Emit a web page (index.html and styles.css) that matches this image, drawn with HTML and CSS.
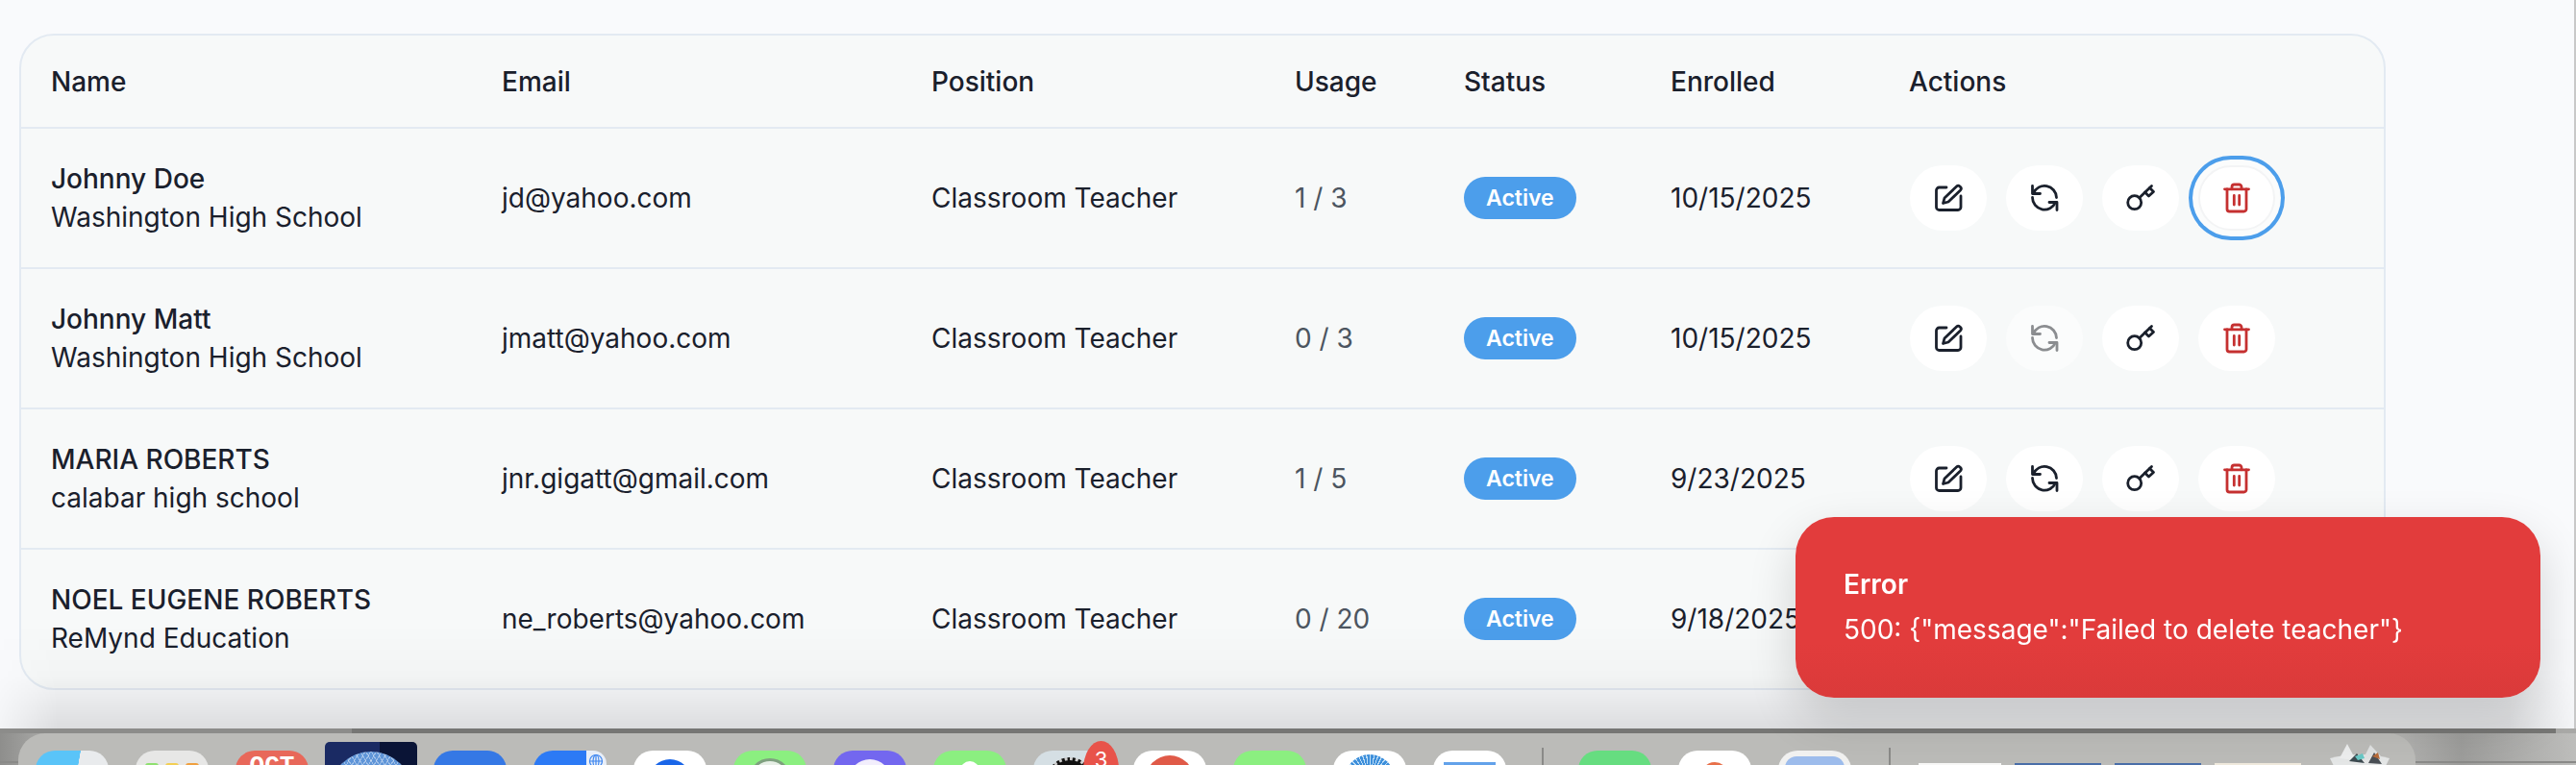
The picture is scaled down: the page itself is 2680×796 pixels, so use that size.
FILE: index.html
```html
<!DOCTYPE html>
<html lang="en">
<head>
<meta charset="utf-8">
<title>Teachers</title>
<link rel="stylesheet" href="styles.css">
</head>
<body>
<svg class="sprites" aria-hidden="true">
  <symbol id="i-edit" viewBox="0 0 32 32"><path d="M14 5H6.500A3 3 0 0 0 3.500 8V25.500A3 3 0 0 0 6.500 28.500H26A3 3 0 0 0 29 25.500V14"/><path d="M10.500 21.500L12 16L24.500 4A2.500 2.500 0 0 1 28 4L28.500 4.500A2.500 2.500 0 0 1 28.500 8L16 20Z"/></symbol>
  <symbol id="i-sync" viewBox="0 0 32 32"><path d="M3.500 3.500V11.500H11.500"/><path d="M29 28.500V20.500H21"/><path d="M4.500 11A12.500 12.500 0 0 1 28.500 15.500"/><path d="M3.500 15.500A12.500 12.500 0 0 0 27.500 20.500"/></symbol>
  <symbol id="i-key" viewBox="0 0 32 32"><circle cx="9.700" cy="20.700" r="7"/><path d="M14.800 15.800L27.500 3.500"/><path d="M20.500 10L24.500 14L29.500 9.500L25.500 5.500"/></symbol>
  <symbol id="i-trash" viewBox="0 0 32 32"><path d="M3.500 6.800H28.500"/><path d="M11 6.800V4.500A2.500 2.500 0 0 1 13.500 2H18.500A2.500 2.500 0 0 1 21 4.500V6.800"/><path d="M6 6.800V27.500A2.500 2.500 0 0 0 8.500 30H23.500A2.500 2.500 0 0 0 26 27.500V6.800"/><path d="M13.300 13.500V23M18.700 13.500V23"/></symbol>
</svg>

<main class="page">
  <section class="card">
    <table class="teachers">
      <colgroup>
        <col class="c-name"><col class="c-email"><col class="c-position"><col class="c-usage"><col class="c-status"><col class="c-enrolled"><col class="c-actions">
      </colgroup>
      <thead>
        <tr><th>Name</th><th>Email</th><th>Position</th><th>Usage</th><th>Status</th><th>Enrolled</th><th>Actions</th></tr>
      </thead>
      <tbody>
        <tr>
          <td><div class="person">Johnny Doe</div><div>Washington High School</div></td>
          <td>jd@yahoo.com</td><td>Classroom Teacher</td><td class="usage">1 / 3</td>
          <td><span class="badge">Active</span></td><td>10/15/2025</td>
          <td><div class="actions">
            <button class="act"><svg class="ico"><use href="#i-edit"/></svg></button>
            <button class="act"><svg class="ico"><use href="#i-sync"/></svg></button>
            <button class="act"><svg class="ico"><use href="#i-key"/></svg></button>
            <button class="act act-danger act-focus"><svg class="ico"><use href="#i-trash"/></svg></button>
          </div></td>
        </tr>
        <tr>
          <td><div class="person">Johnny Matt</div><div>Washington High School</div></td>
          <td>jmatt@yahoo.com</td><td>Classroom Teacher</td><td class="usage">0 / 3</td>
          <td><span class="badge">Active</span></td><td>10/15/2025</td>
          <td><div class="actions">
            <button class="act"><svg class="ico"><use href="#i-edit"/></svg></button>
            <button class="act act-off"><svg class="ico"><use href="#i-sync"/></svg></button>
            <button class="act"><svg class="ico"><use href="#i-key"/></svg></button>
            <button class="act act-danger"><svg class="ico"><use href="#i-trash"/></svg></button>
          </div></td>
        </tr>
        <tr>
          <td><div class="person">MARIA ROBERTS</div><div>calabar high school</div></td>
          <td>jnr.gigatt@gmail.com</td><td>Classroom Teacher</td><td class="usage">1 / 5</td>
          <td><span class="badge">Active</span></td><td>9/23/2025</td>
          <td><div class="actions">
            <button class="act"><svg class="ico"><use href="#i-edit"/></svg></button>
            <button class="act"><svg class="ico"><use href="#i-sync"/></svg></button>
            <button class="act"><svg class="ico"><use href="#i-key"/></svg></button>
            <button class="act act-danger"><svg class="ico"><use href="#i-trash"/></svg></button>
          </div></td>
        </tr>
        <tr>
          <td><div class="person">NOEL EUGENE ROBERTS</div><div>ReMynd Education</div></td>
          <td>ne_roberts@yahoo.com</td><td>Classroom Teacher</td><td class="usage">0 / 20</td>
          <td><span class="badge">Active</span></td><td>9/18/2025</td>
          <td><div class="actions">
            <button class="act"><svg class="ico"><use href="#i-edit"/></svg></button>
            <button class="act"><svg class="ico"><use href="#i-sync"/></svg></button>
            <button class="act"><svg class="ico"><use href="#i-key"/></svg></button>
            <button class="act act-danger"><svg class="ico"><use href="#i-trash"/></svg></button>
          </div></td>
        </tr>
      </tbody>
    </table>
  </section>
</main>

<div class="toast" role="alert">
  <div class="toast-title">Error</div>
  <div class="toast-msg">500: {"message":"Failed to delete teacher"}</div>
</div>

<footer class="desk">
  <nav class="dock">
    <div class="app finder"></div>
    <div class="app launchpad"><i class="dot d-g"></i><i class="dot d-y"></i><i class="dot d-o"></i></div>
    <div class="app calendar">OCT</div>
    <div class="app globe"><i class="sphere"></i></div>
    <div class="app blue"></div>
    <div class="app translate"><svg class="web" viewBox="0 0 16 16"><circle cx="8" cy="8" r="6.500"/><ellipse cx="8" cy="8" rx="3" ry="6.500"/><path d="M1.500 8H14.500M8 1.500V14.500"/></svg></div>
    <div class="app white"><i class="cap cap-blue"></i></div>
    <div class="app green"><i class="cap cap-ring"></i></div>
    <div class="app purple"><i class="cap cap-pale"></i></div>
    <div class="app green"><i class="cap cap-white"></i></div>
    <div class="app settings"><i class="cap cap-black"></i><span class="count">3</span></div>
    <div class="app white"><i class="cap cap-red"></i></div>
    <div class="app green"></div>
    <div class="app white"><i class="cap cap-safari"></i></div>
    <div class="app white"><i class="bar"></i></div>
    <div class="sep sep-a"></div>
    <div class="app mint"></div>
    <div class="app white"><i class="cap cap-orange"></i></div>
    <div class="app folder"><i class="pane"></i></div>
    <div class="sep sep-b"></div>
    <div class="thumb t-white"></div>
    <div class="thumb t-blue"></div>
    <div class="thumb t-blue"></div>
    <div class="thumb t-paper"></div>
    <svg class="bin" viewBox="0 0 70 24"><path d="M4 16Q35 8 66 16L62 24H8Z" fill="#e4e6e6"/><path d="M14 16L22 1L31 18Z" fill="#eceded"/><path d="M38 18L46 2L58 15Z" fill="#dfe1e1"/><path d="M24 19L32 11L40 21Z" fill="#3d4a50"/><path d="M44 21L50 10L58 22Z" fill="#4a4f55"/><path d="M30 14L38 11L40 16L33 18Z" fill="#67c7c4"/><path d="M48 14L54 10L56 17Z" fill="#b56a3a"/></svg>
  </nav>
</footer>
</body>
</html>
```

FILE: styles.css
```css
* { box-sizing: border-box; }

html, body {
  margin: 0;
  height: 796px;
  overflow: hidden;
}

body {
  font-family: Inter, "Liberation Sans", sans-serif;
  font-size: 28px;
  line-height: 40px;
  color: #1a202c;
  background: #a6a6a4;
  display: flex;
  flex-direction: column;
}

.sprites { display: none; }

/* page */
.page {
  position: relative;
  height: 758px;
  flex: none;
  padding: 35px 196px 0 20px;
  background: #f9fafc;
  border-right: 2px solid #c8c8c8;
}

.page::after {
  content: "";
  position: absolute;
  left: 0;
  right: 0;
  bottom: 0;
  height: 110px;
  background: linear-gradient(to bottom, rgba(0,0,0,0), rgba(0,0,0,.02) 50%, rgba(0,0,0,.115));
  -webkit-mask-image: linear-gradient(to right, rgba(0,0,0,.2), #000 60px, #000 2610px, rgba(0,0,0,.2));
  mask-image: linear-gradient(to right, rgba(0,0,0,.2), #000 60px, #000 2610px, rgba(0,0,0,.2));
  pointer-events: none;
}

.card {
  height: 683px;
  background: #f7f9f9;
  border: 2px solid #e3eaf2;
  border-radius: 36px;
  overflow: hidden;
}

.teachers {
  width: 100%;
  table-layout: fixed;
  border-collapse: separate;
  border-spacing: 0;
}

.c-name { width: 469px; }
.c-email { width: 447px; }
.c-position { width: 378px; }
.c-usage { width: 176px; }
.c-status { width: 215px; }
.c-enrolled { width: 248px; }

th, td {
  padding: 0 0 0 31px;
  text-align: left;
  vertical-align: middle;
  border-bottom: 2px solid #e3eaf2;
}

th {
  height: 97px;
  font-weight: 450;
}

td {
  height: 146px;
  font-weight: 400;
}

tbody tr:last-child td { border-bottom: 0; height: 144px; }

.person { font-weight: 450; }
.usage { color: #4c5560; }

.badge {
  display: inline-flex;
  align-items: center;
  height: 44px;
  padding: 0 23px;
  border-radius: 22px;
  background: #4c9eeb;
  color: #fff;
  font-size: 23px;
  font-weight: 600;
  vertical-align: middle;
}

.actions {
  display: flex;
  gap: 20px;
  padding-left: 1px;
}

.act {
  width: 80px;
  height: 68px;
  padding: 0;
  display: flex;
  align-items: center;
  justify-content: center;
  background: #fff;
  border: 0;
  border-radius: 34px;
  color: #1a202c;
}

.ico {
  width: 32px;
  height: 32px;
  fill: none;
  stroke: currentColor;
  stroke-width: 2.8;
  stroke-linecap: round;
  stroke-linejoin: round;
}

.act-danger { color: #c53030; }
.act-off { background: #fbfcfc; color: #8b8d90; }

.act-focus {
  border: 2px solid #f3f4f5;
  box-shadow: 0 0 0 6px #fbfcfc, 0 0 0 10px #4c9eeb;
}

/* toast */
.toast {
  position: fixed;
  left: 1868px;
  top: 538px;
  width: 775px;
  height: 188px;
  padding: 47px 50px;
  border-radius: 40px;
  background: linear-gradient(to bottom, #e23c3c 70%, #da3a3a);
  color: #fff;
  line-height: 47px;
  box-shadow: 0 20px 50px rgba(0,0,0,.16);
  z-index: 5;
}

.toast-title { font-weight: 600; }
.toast-msg { font-weight: 400; }

/* desktop and dock */
.desk {
  flex: 1;
  border-top: 5px solid #7a7a78;
  border-image: linear-gradient(to right, #8c8c8a 367px, #767674 367px, #767674 2658px, #a8a8a6 2658px) 1;
  background:
    linear-gradient(to bottom, transparent 29px, #8a8a88 29px, #8a8a88 31px, transparent 31px),
    linear-gradient(to right, #8e8e8c, #b0b0ae 60px, #b0b0ae 2500px, #9c9c9a 2560px, #bdbdbb);
  overflow: hidden;
}

.dock {
  display: flex;
  align-items: flex-start;
  gap: 28px;
  height: 33px;
  width: 2494px;
  margin-left: 19px;
  padding: 18px 0 0 18px;
  background: #bbbbb8;
  border-radius: 28px 28px 0 0;
}

.app {
  position: relative;
  flex: none;
  display: flex;
  justify-content: center;
  width: 76px;
  height: 60px;
  border-radius: 20px 20px 0 0;
}

.finder { background: linear-gradient(100deg, #5ac4f8 54%, #e9ebed 54.500%); }

.launchpad {
  gap: 7px;
  padding-top: 13px;
  background: #e7e7e6;
}

.dot {
  width: 14px;
  height: 14px;
  border-radius: 3px;
}
.d-g { background: #8fe070; }
.d-y { background: #f3cf55; }
.d-o { background: #f0a040; }

.calendar {
  padding-top: 3px;
  background: #e8685a;
  color: #fff;
  font-family: "Liberation Mono", monospace;
  font-size: 26px;
  line-height: 26px;
  font-weight: 700;
}

.globe {
  width: 96px;
  height: 60px;
  margin: -9px -11px 0;
  padding-top: 10px;
  border-radius: 5px 5px 0 0;
  background: linear-gradient(to right, #1a2a63 59%, #0a1436 59%);
}

.sphere {
  width: 86px;
  height: 86px;
  border-radius: 50%;
  background:
    repeating-linear-gradient(60deg, rgba(255,255,255,.4) 0 1px, transparent 1px 5px),
    repeating-linear-gradient(-60deg, rgba(255,255,255,.4) 0 1px, transparent 1px 5px),
    #5f95d8;
}

.blue { background: #3578e5; }
.translate { justify-content: flex-end; padding: 3px 3px 0 0; background: linear-gradient(to right, #2c7af5 72%, #e8eef8 72%); border-radius: 20px 14px 0 0; }
.web { width: 16px; height: 16px; fill: none; stroke: #3d86f0; stroke-width: 1.2; }
.white { background: #fff; }
.green { background: #8bef80; }
.purple { background: #7367ef; }
.mint { background: #66dd80; }
.settings { background: #d5dfe4; }

.folder {
  padding-top: 6px;
  background: #f1f1f0;
}

.pane {
  width: 62px;
  height: 50px;
  border-radius: 12px 12px 0 0;
  background: #9dbcec;
}

.cap {
  width: 44px;
  height: 44px;
  margin-top: 9px;
  border-radius: 50%;
}

.cap-blue { background: #1a66e8; }
.cap-ring { margin-top: 8px; background: #e7efe6; border: 3px solid #7fa07f; }
.cap-pale { margin-top: 9px; background: #f2eefc; }
.cap-white { width: 20px; height: 20px; margin-top: 11px; background: #fff; }
.cap-black { margin-top: 7px; width: 48px; height: 48px; background: #111; border: 3px dotted #ccc; }
.cap-red { margin-top: 5px; width: 50px; height: 50px; background: #e05a48; }
.cap-safari {
  margin-top: 4px;
  width: 52px;
  height: 52px;
  background: repeating-conic-gradient(#bcdcf5 0 3deg, #3d8fdb 3deg 9deg);
}
.cap-orange { margin-top: 12px; width: 28px; height: 28px; background: #e8704a; }

.bar {
  width: 54px;
  height: 30px;
  margin-top: 12px;
  background: #63a2ea;
}

.count {
  position: absolute;
  left: 52px;
  top: -10px;
  width: 37px;
  height: 60px;
  border-radius: 50%;
  background: #e8534a;
  color: #fff;
  font-size: 22px;
  line-height: 38px;
  text-align: center;
}

.sep {
  flex: none;
  width: 2px;
  height: 18px;
  margin-top: -3px;
  background: #8a8a88;
}
.sep-a { margin-left: 9px; margin-right: 8px; }
.sep-b { margin-left: 11px; margin-right: 1px; }

.thumb {
  flex: none;
  width: 90px;
  height: 40px;
  margin: 13px -7px 0;
}
.t-white { width: 86px; background: #f7f7f6; margin-left: 0; }
.t-blue { background: #4a6ea8; }
.t-paper { background: #efe9dc; }

.bin {
  flex: none;
  width: 70px;
  height: 24px;
  margin: -8px 0 0 5px;
}
```
